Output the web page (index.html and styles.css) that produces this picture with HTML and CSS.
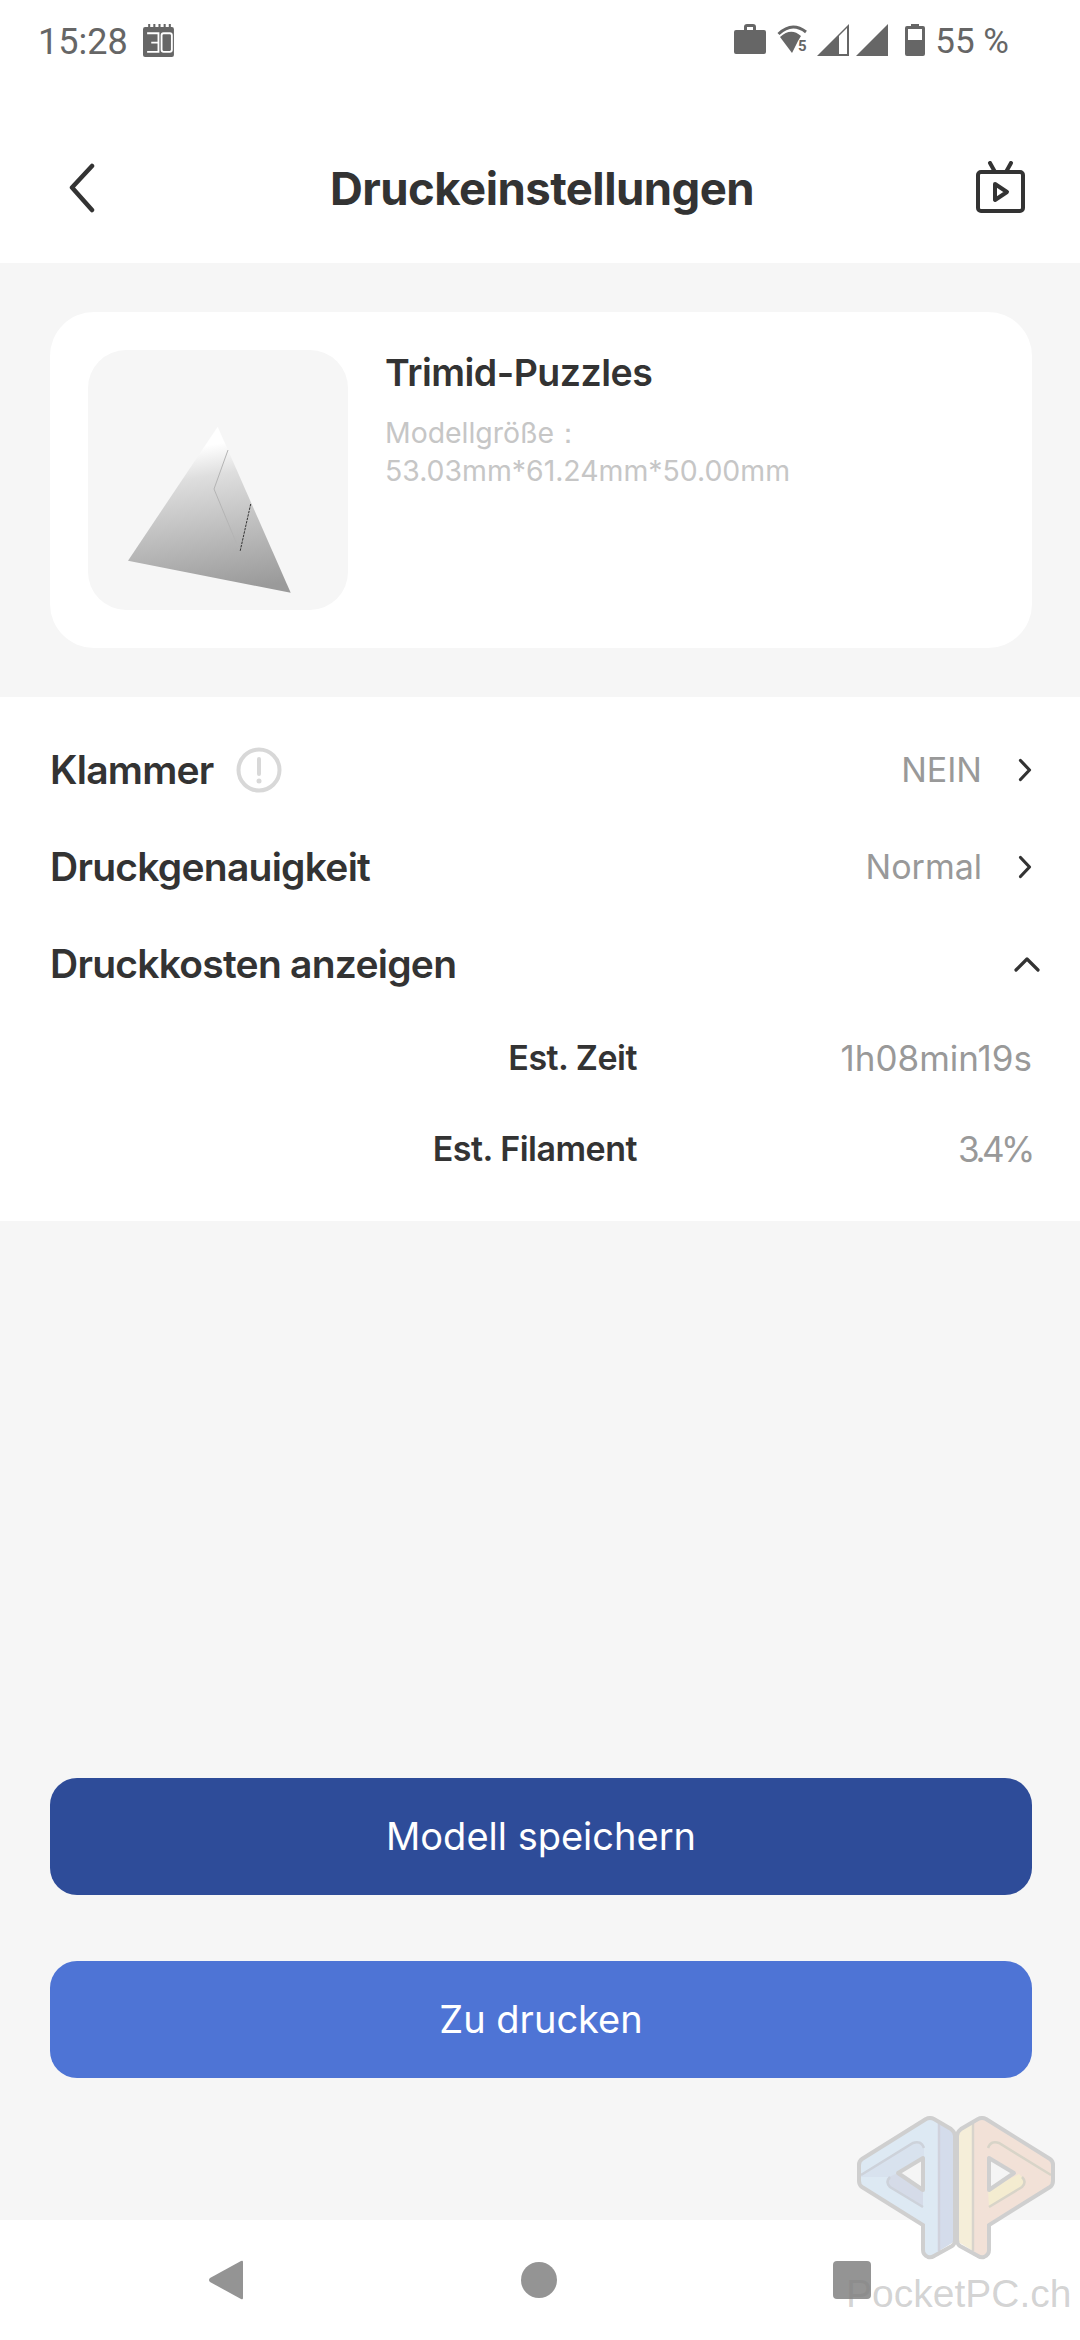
FILE: index.html
```html
<!DOCTYPE html>
<html lang="de">
<head>
<meta charset="utf-8">
<title>Druckeinstellungen</title>
<link rel="stylesheet" href="styles.css">
</head>
<body>
<div class="phone">
  <div class="statusbar">
    <div class="st-left">
      <span class="st-time">15:28</span>
      <svg class="ic-cal" width="33" height="33" viewBox="0 0 32 32"><path d="M0 5q0-2 2-2h3V0h2v3h3V0h2v3h3V0h2v3h3V0h2v3h3V0h2v3h1q2 0 2 2v25q0 2-2 2H2q-2 0-2-2z" fill="#666"/><path d="M4 9h11v18H4M8 18h7M20 9h6q2 0 2 2v14q0 2-2 2h-6q-2 0-2-2V11q0-2 2-2z" fill="none" stroke="#fff" stroke-width="1.800"/></svg>
    </div>
    <div class="st-right">
      <svg width="32" height="30" viewBox="0 0 32 30"><path d="M2 6h8V3q0-3 3-3h6q3 0 3 3v3h8q2 0 2 2v20q0 2-2 2H2q-2 0-2-2V8q0-2 2-2zM13 3v3h6V3z" fill="#666" fill-rule="evenodd"/></svg>
      <svg class="st-wifi" width="32" height="30" viewBox="0 0 32 30"><path d="M1.500 10Q15-3 29 8" fill="none" stroke="#666" stroke-width="3"/><path d="M3 13Q14 3 24 12L21 17 15 29z" fill="#666"/><text class="st-5" x="21" y="27">5</text></svg>
      <svg class="st-sig" width="32" height="32" viewBox="0 0 32 32"><path d="M32 0v32H0zM22 12v18h8V4z" fill="#666" fill-rule="evenodd"/></svg>
      <svg class="st-sig2" width="32" height="32" viewBox="0 0 32 32"><path d="M32 0v32H0z" fill="#666"/></svg>
      <svg class="st-bat" width="20" height="32" viewBox="0 0 20 32"><path d="M6 0h8v2h4q2 0 2 2v26q0 2-2 2H2q-2 0-2-2V4q0-2 2-2h4zM3 5v11h14V5z" fill="#666" fill-rule="evenodd"/></svg>
      <span class="st-pct">55 %</span>
    </div>
  </div>

  <header class="topbar">
    <svg class="ic-back" width="26" height="50" viewBox="0 0 26 50"><path d="M23 3 3 24.500 23 47" fill="none" stroke="#333" stroke-width="4.500" stroke-linecap="round" stroke-linejoin="round"/></svg>
    <h1 class="title">Druckeinstellungen</h1>
    <svg class="ic-tv" width="52" height="54" viewBox="0 0 52 54"><path d="M15 2l5 9M36 2l-5 9" fill="none" stroke="#333" stroke-width="4" stroke-linecap="round"/><rect x="3" y="11" width="45" height="39" rx="3" fill="none" stroke="#333" stroke-width="4"/><path d="M20 23 32 31 20 39z" fill="none" stroke="#333" stroke-width="4" stroke-linejoin="round"/></svg>
  </header>

  <section class="model-wrap">
    <div class="card">
      <div class="thumb">
        <svg width="260" height="260" viewBox="0 0 260 260">
          <defs><linearGradient id="g" x1="0.42" y1="0" x2="0.58" y2="1"><stop offset="0.12" stop-color="#fff"/><stop offset="0.3" stop-color="#dedede"/><stop offset="0.65" stop-color="#bcbcbc"/><stop offset="1" stop-color="#9a9a9a"/></linearGradient></defs>
          <path d="M129.700 76.700 40 210.700 202.700 242.700z" fill="url(#g)"/>
          <path d="M140 100 126 139 152 201.700" fill="none" stroke="#b4b4b4" stroke-width="1"/>
          <path d="M162.700 154 152 201.700" fill="none" stroke="#333" stroke-width="1" stroke-dasharray="2.500 1"/>
        </svg>
      </div>
      <div class="card-info">
        <div class="card-name">Trimid-Puzzles</div>
        <div class="card-size">Modellgröße：<br>53.03mm*61.24mm*50.00mm</div>
      </div>
    </div>
  </section>

  <section class="settings">
    <div class="row">
      <div class="row-label">Klammer
        <svg class="ic-info" width="46" height="46" viewBox="0 0 46 46"><circle cx="23" cy="23" r="20.500" fill="none" stroke="#d8d8d8" stroke-width="4"/><path d="M23 12v15" stroke="#d8d8d8" stroke-width="4" stroke-linecap="round"/><circle cx="23" cy="34" r="2.500" fill="#d8d8d8"/></svg>
      </div>
      <div class="row-value">NEIN<svg class="ic-chev" width="14" height="24" viewBox="0 0 14 24"><path d="M2.500 2.500 11.500 12 2.500 21.500" fill="none" stroke="#333" stroke-width="3.200" stroke-linecap="round" stroke-linejoin="round"/></svg></div>
    </div>
    <div class="row">
      <div class="row-label">Druckgenauigkeit</div>
      <div class="row-value">Normal<svg class="ic-chev" width="14" height="24" viewBox="0 0 14 24"><path d="M2.500 2.500 11.500 12 2.500 21.500" fill="none" stroke="#333" stroke-width="3.200" stroke-linecap="round" stroke-linejoin="round"/></svg></div>
    </div>
    <div class="row">
      <div class="row-label">Druckkosten anzeigen</div>
      <svg class="ic-up" width="26" height="16" viewBox="0 0 26 16"><path d="M2 14 13 3l11 11" fill="none" stroke="#333" stroke-width="3.200" stroke-linecap="round" stroke-linejoin="round"/></svg>
    </div>
    <div class="est"><span class="est-label">Est. Zeit</span><span class="est-value">1h08min19s</span></div>
    <div class="est"><span class="est-label">Est. Filament</span><span class="est-value est-pct">3.4%</span></div>
  </section>

  <section class="actions">
    <div class="btn btn-dark">Modell speichern</div>
    <div class="btn btn-blue">Zu drucken</div>
  </section>

  <nav class="navbar">
    <svg width="36" height="42" viewBox="0 0 36 42"><path d="M33 2q2-1 2 1v36q0 2-2 1L2 23q-2-2 0-4z" fill="#949494"/></svg>
    <div class="nav-dot"></div>
    <div class="nav-sq"></div>
  </nav>

  <div class="watermark">
    <svg width="198" height="144" viewBox="-1 -1 198 144">
      <g>
        <path d="M68 2 4 42q-3 2-3 6v16q0 4 3 6l61 38v25q0 5 5 7h6l5-2V5l-5-3q-4-2-8 0z" fill="#dde9f3"/>
        <path d="M81 5 93 12q4 3 4 7v101q0 4-3 6l-13 8z" fill="#d4dceb"/>
        <path d="M1 58 55 26q6-3 10 3l1 3v8L40 56 65 73v17L32 70q-5-5 0-10L3 60z" fill="#d8e2ee"/>
        <path d="M65 73 40 56l-9 4q-4 5 0 9l34 21z" fill="#d5dbe8"/>
        <path d="M3 58 55 26q8-3 11 5M65 90 32 70q-5-5 0-10" fill="none" stroke="#cdd2da" stroke-width="2.500"/>
        <path d="M65 41v32L40 56z" fill="#f5f5f5" stroke="#cfcfcf" stroke-width="4" stroke-linejoin="round"/>
        <path d="M81 5v129" fill="none" stroke="#d0d2dc" stroke-width="2.500"/>
        <path d="M68 2 4 42q-3 2-3 6v16q0 4 3 6l61 38v25q0 5 5 7q3 1 6-1l18-10q3-2 3-6V19q0-4-4-7L76 2q-4-2-8 0z" fill="none" stroke="#cfcfcf" stroke-width="4"/>
      </g>
      <g>
        <path d="M128 2l64 40q3 2 3 6v16q0 4-3 6l-61 38v25q0 5-5 7h-6l-5-2V5l5-3q4-2 8 0z" fill="#f2e1d7"/>
        <path d="M115 5l-12 7q-4 3-4 7v101q0 4 3 6l13 8z" fill="#f5eed9"/>
        <path d="M131 90l33-20q5-5 0-10l-3-3-31 16z" fill="#f4ecd0"/>
        <path d="M193 58 141 26q-8-3-11 5M131 90l33-20q5-5 0-10" fill="none" stroke="#d8d4c8" stroke-width="2.500"/>
        <path d="M131 41v32l25-17z" fill="#f5f5f5" stroke="#cfcfcf" stroke-width="4" stroke-linejoin="round"/>
        <path d="M115 5v129" fill="none" stroke="#d8d4cc" stroke-width="2.500"/>
        <path d="M128 2l64 40q3 2 3 6v16q0 4-3 6l-61 38v25q0 5-5 7q-3 1-6-1l-18-10q-3-2-3-6V19q0-4 4-7l17-10q4-2 8 0z" fill="none" stroke="#cfcfcf" stroke-width="4"/>
      </g>
    </svg>
    <span class="wm-text">PocketPC.ch</span>
  </div>
</div>
</body>
</html>
```
FILE: styles.css
```css
* { box-sizing: border-box; }
html, body { margin: 0; padding: 0; }
body { background: #f6f6f6; font-family: "Inter", "Noto Sans", sans-serif; color: #333; }
.phone { position: relative; width: 1080px; height: 2340px; display: flex; flex-direction: column; overflow: hidden; }

.statusbar { height: 80px; background: #fff; display: flex; justify-content: space-between; padding: 24px 71px 0 38px; font-family: "Roboto", sans-serif; color: #666; font-size: 35px; line-height: 32px; }
.st-left, .st-right { display: flex; align-items: flex-start; }
.st-left { gap: 15px; }
.st-time { font-size: 36px; padding-top: 2px; }
.st-right svg { display: block; }
.st-wifi { margin-left: 11px; }
.st-5 { font: 700 15px "Roboto", sans-serif; fill: #666; }
.st-sig { margin-left: 8px; }
.st-sig2 { margin-left: 7px; }
.st-bat { margin-left: 17px; }
.st-pct { margin-left: 10px; padding-top: 2px; }

.topbar { height: 183px; background: #fff; display: grid; grid-template-columns: 1fr auto 1fr; align-items: center; padding: 33px 53px 0 57px; }
.ic-back { margin-left: 12px; }
.ic-tv { justify-self: end; }
.title { margin: 2px 0 0; font-size: 45.500px; font-weight: 700; letter-spacing: -.55px; color: #333; line-height: 56px; }

.model-wrap { height: 434px; padding: 49px 48px 49px 50px; }
.card { height: 336px; background: #fff; border-radius: 44px; padding: 38px; display: flex; gap: 37px; }
.thumb { width: 260px; height: 260px; border-radius: 38px; background: #f6f6f6; flex: none; }
.thumb svg { display: block; }
.card-info { padding-top: 1px; }
.card-name { font-size: 37.500px; font-weight: 600; line-height: 44px; letter-spacing: -.5px; color: #333; }
.card-size { margin-top: 19px; font-size: 28.400px; line-height: 38px; color: #c6c6c6; }

.settings { height: 524px; background: #fff; padding: 24px 48px 0 50px; }
.row { height: 97px; display: flex; align-items: center; justify-content: space-between; }
.row-label { display: flex; align-items: center; gap: 22px; font-size: 39px; font-weight: 600; letter-spacing: -.75px; color: #333; }
.row-value { display: flex; align-items: center; gap: 36px; font-size: 34px; color: #999; }
.ic-up { margin-right: -8px; }
.est { height: 91px; display: grid; grid-template-columns: 587px 1fr; align-items: center; }
.est-label { text-align: right; font-size: 34px; font-weight: 600; letter-spacing: -.5px; color: #333; }
.est-value { text-align: right; font-size: 35px; color: #999; }
.est-pct { letter-spacing: -3.500px; }

.actions { flex: 1; display: flex; flex-direction: column; gap: 66px; padding: 557px 48px 0 50px; }
.btn { height: 117px; border-radius: 27px; display: flex; align-items: center; justify-content: center; color: #fff; font-size: 38px; padding-bottom: 2px; }
.btn-dark { background: #2e4c99; }
.btn-blue { background: #4e74d5; }

.navbar { height: 120px; background: #fff; display: flex; align-items: center; justify-content: space-between; padding: 0 209px 0 208px; }
.navbar svg { display: block; }
.nav-dot { width: 36px; height: 36px; border-radius: 50%; background: #949494; }
.nav-sq { width: 38px; height: 38px; border-radius: 4px; background: #949494; }

.watermark { position: absolute; left: 846px; top: 2116px; width: 224px; display: flex; flex-direction: column; align-items: flex-start; }
.watermark svg { display: block; margin-left: 11px; }
.wm-text { font-family: "Liberation Sans", sans-serif; font-size: 39px; line-height: 46px; margin-top: 11px; color: rgba(130,130,130,.35); white-space: nowrap; }
```
